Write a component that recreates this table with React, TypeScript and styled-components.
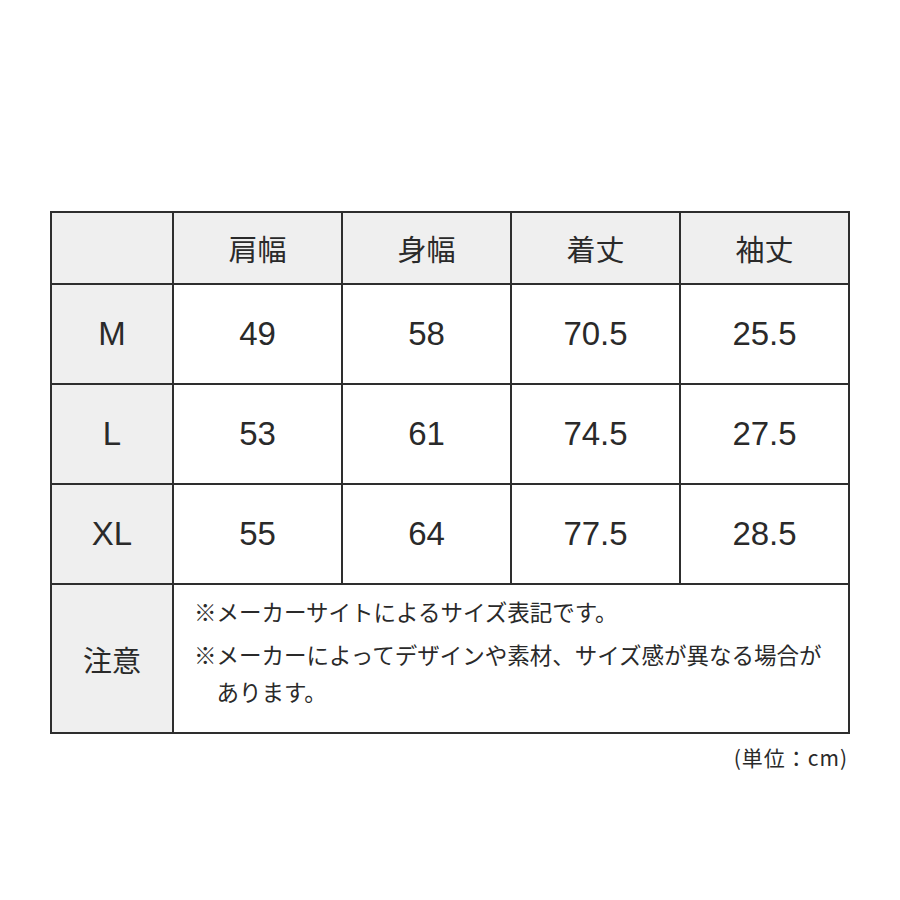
import styled, { createGlobalStyle } from "styled-components";

const GlobalStyle = createGlobalStyle`
    html, body {
        margin: 0;
        padding: 0;
        background: #ffffff;
    }
    body {
        font-family: "Liberation Sans", "Noto Sans CJK JP", sans-serif;
        color: #2a2a2a;
    }
`

const Page = styled.main`
    width: 900px;
    height: 900px;
    box-sizing: border-box;
    padding: 211px 51px 0 50px;
`

const SizeTable = styled.table`
    border-collapse: collapse;
    table-layout: fixed;
    width: 799px;
`

const HeadCell = styled.th<{ $w?: number }>`
    width: ${props => props.$w ?? 167}px;
    height: 70px;
    padding: 0;
    border: 2px solid #2e2e2e;
    background-color: #efefef;
    font-family: "Noto Sans CJK JP", sans-serif;
    font-weight: 400;
    font-size: 29px;
    text-align: center;
    vertical-align: middle;
`

const LabelCell = styled.th<{ $tall?: boolean }>`
    height: ${props => props.$tall ? 147 : 98}px;
    padding: 0;
    border: 2px solid #2e2e2e;
    background-color: #efefef;
    font-weight: 400;
    font-size: ${props => props.$tall ? 29 : 33}px;
    font-family: ${props => props.$tall ? `"Noto Sans CJK JP", sans-serif` : `"Liberation Sans", sans-serif`};
    text-align: center;
    vertical-align: middle;
`

const ValueCell = styled.td`
    padding: 0;
    border: 2px solid #2e2e2e;
    font-size: 33px;
    text-align: center;
    vertical-align: middle;
`

const NoteCell = styled.td`
    padding: 0 0 14px 20px;
    border: 2px solid #2e2e2e;
    vertical-align: middle;
`

const Note = styled.p`
    margin: 0;
    padding-left: 1em;
    text-indent: -1em;
    font-family: "Noto Sans CJK JP", sans-serif;
    font-size: 22.5px;
    line-height: 37px;
    white-space: nowrap;

    & + & {
        margin-top: 6px;
    }
`

const Unit = styled.div`
    width: 798px;
    margin-top: 8px;
    text-align: right;
    font-family: "Noto Sans CJK JP", sans-serif;
    font-size: 21px;
    letter-spacing: 1px;
`

const columns = ["肩幅", "身幅", "着丈", "袖丈"]

const rows = [
    { size: "M", values: ["49", "58", "70.5", "25.5"] },
    { size: "L", values: ["53", "61", "74.5", "27.5"] },
    { size: "XL", values: ["55", "64", "77.5", "28.5"] },
]

function App() {
    return (
        <Page>
            <GlobalStyle />
            <SizeTable>
                <thead>
                    <tr>
                        <HeadCell $w={120}></HeadCell>
                        {columns.map(c => <HeadCell key={c}>{c}</HeadCell>)}
                    </tr>
                </thead>
                <tbody>
                    {rows.map(r => (
                        <tr key={r.size}>
                            <LabelCell>{r.size}</LabelCell>
                            {r.values.map((v, i) => <ValueCell key={i}>{v}</ValueCell>)}
                        </tr>
                    ))}
                    <tr>
                        <LabelCell $tall>注意</LabelCell>
                        <NoteCell colSpan={4}>
                            <Note>※メーカーサイトによるサイズ表記です。</Note>
                            <Note>※メーカーによってデザインや素材、サイズ感が異なる場合が<br />あります。</Note>
                        </NoteCell>
                    </tr>
                </tbody>
            </SizeTable>
            <Unit>(単位：cm)</Unit>
        </Page>
    )
}

export default App
